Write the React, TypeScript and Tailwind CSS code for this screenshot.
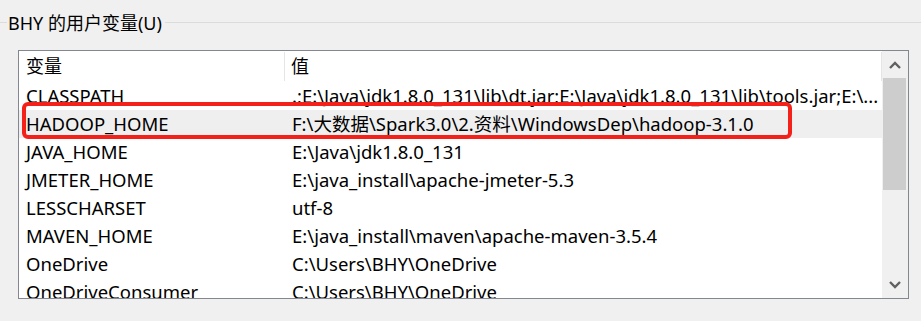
import React from "react";

const rows: [string, string][] = [
  ["CLASSPATH", ".;E:\\Java\\jdk1.8.0_131\\lib\\dt.jar;E:\\Java\\jdk1.8.0_131\\lib\\tools.jar;E:\\..."],
  ["HADOOP_HOME", "F:\\大数据\\Spark3.0\\2.资料\\WindowsDep\\hadoop-3.1.0"],
  ["JAVA_HOME", "E:\\Java\\jdk1.8.0_131"],
  ["JMETER_HOME", "E:\\java_install\\apache-jmeter-5.3"],
  ["LESSCHARSET", "utf-8"],
  ["MAVEN_HOME", "E:\\java_install\\maven\\apache-maven-3.5.4"],
  ["OneDrive", "C:\\Users\\BHY\\OneDrive"],
  ["OneDriveConsumer", "C:\\Users\\BHY\\OneDrive"],
];

export default function App() {
  return (
    <div
      className="w-[921px] h-[321px] bg-[#f0f0f0] overflow-hidden text-black"
      style={{ fontFamily: '"Noto Sans", "Noto Sans CJK SC", sans-serif' }}
    >
      <div className="flex items-center h-[46px] pb-[1px]">
        <div className="w-[7px] h-px bg-[#dcdcdc]" />
        <span className="px-[1px] text-[18px] leading-none">BHY 的用户变量(U)</span>
        <div className="flex-1 h-px bg-[#dcdcdc] ml-[2px]" />
      </div>
      <div className="ml-[18px] mt-[4px] w-[891px] h-[249px] border border-[#828790] bg-white relative flex">
        <div className="flex-1 flex flex-col overflow-hidden">
          <div className="h-[31px] flex items-stretch shrink-0">
            <div className="w-[266px] pl-[7px] flex items-center text-[18px] border-r border-[#e5e5e5] my-[1px]">变量</div>
            <div className="flex-1 pl-[6px] flex items-center text-[18px] border-r border-[#e5e5e5] my-[1px]">值</div>
          </div>
          {rows.map(([k, v], i) => (
            <div
              key={k}
              className={`h-[28px] flex items-center shrink-0 text-[18.5px] whitespace-nowrap ${i === 1 ? "bg-[#efefef]" : ""}`}
            >
              <div className="w-[267px] pl-[7px] overflow-hidden">{k}</div>
              <div className="flex-1 pl-[6px] overflow-hidden">{v}</div>
            </div>
          ))}
        </div>
        <div className="w-[26px] shrink-0 bg-[#f0f0f0] flex flex-col">
          <div className="h-[27px] flex items-center justify-center pr-[1px]">
            <svg width="12" height="8" viewBox="0 0 12 8">
              <path d="M1 7 L6 2 L11 7" stroke="#606060" strokeWidth="2.4" fill="none" />
            </svg>
          </div>
          <div className="ml-[1px] w-[23px] h-[112px] bg-[#cdcdcd]" />
          <div className="flex-1" />
          <div className="h-[27px] flex items-center justify-center pr-[1px]">
            <svg width="12" height="8" viewBox="0 0 12 8">
              <path d="M1 1 L6 6 L11 1" stroke="#606060" strokeWidth="2.4" fill="none" />
            </svg>
          </div>
        </div>
        <div className="absolute left-[3px] top-[51px] w-[770px] h-[37px] border-[4px] border-[#f4211a] rounded-[6px]" />
      </div>
    </div>
  );
}
